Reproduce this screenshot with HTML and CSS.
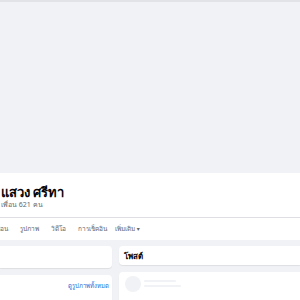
FILE: index.html
```html
<!DOCTYPE html>
<html lang="th">
<head>
  <meta charset="UTF-8">
  <title>แสวง ศรีทา</title>
  <link rel="stylesheet" href="styles.css">
</head>
<body>

<div class="topbar"></div>

<div class="profile-head">
  <div class="cover"></div>
  <div class="identity">
    <h1 class="name">แสวง ศรีทา</h1>
    <div class="friends">เพื่อน 621 คน</div>
  </div>
  <nav class="tabs">
    <span class="tab tab-cut">เพื่อน</span>
    <span class="tab">รูปภาพ</span>
    <span class="tab">วิดีโอ</span>
    <span class="tab">การเช็คอิน</span>
    <span class="tab tab-more">เพิ่มเติม <span class="caret">▾</span></span>
  </nav>
</div>

<div class="content">
  <div class="col col-left">
    <div class="card intro"></div>
    <div class="card photos">
      <a class="see-all" href="#">ดูรูปภาพทั้งหมด</a>
    </div>
  </div>
  <div class="col col-right">
    <div class="card posts-title">โพสต์</div>
    <div class="card post">
      <div class="skeleton-avatar"></div>
      <div class="skeleton-lines">
        <div class="bar short"></div>
        <div class="bar"></div>
      </div>
    </div>
  </div>
</div>

</body>
</html>
```

FILE: styles.css
```css
body {
  margin: 0;
  background: #f0f2f5;
  font-family: 'Noto Sans', 'DejaVu Sans', sans-serif;
  color: #050505;
  overflow: hidden;
  height: 300px;
}
.topbar {
  height: 2px;
  background: #e2e3e6;
}
.profile-head {
  background: #ffffff;
}
.cover {
  height: 171px;
  background: #f0f2f5;
}
.identity {
  padding: 11px 0 7px 1px;
}
.name {
  margin: 0;
  font-size: 13px;
  font-weight: bold;
  line-height: 16px;
}
.friends {
  font-size: 7px;
  color: #65676b;
  line-height: 10px;
}
.tabs {
  border-top: 1px solid #dddfe2;
  height: 22px;
  display: flex;
  align-items: center;
  gap: 12px;
  font-size: 6.5px;
  color: #65676b;
}
.tab-cut {
  margin-left: -6px;
}
.tab-more {
  margin-left: -4px;
}
.caret {
  font-size: 6px;
}
.content {
  display: flex;
  gap: 7px;
  padding-top: 6px;
}
.col {
  display: flex;
  flex-direction: column;
  gap: 7px;
}
.col-left {
  width: 112px;
}
.col-right {
  flex: 1;
}
.card {
  background: #ffffff;
  border-radius: 4px;
  box-shadow: 0 1px 1px rgba(0, 0, 0, 0.08);
}
.col-left .card {
  border-top-left-radius: 0;
  border-bottom-left-radius: 0;
}
.col-right .card {
  border-top-right-radius: 0;
  border-bottom-right-radius: 0;
}
.intro {
  height: 22px;
}
.photos {
  height: 30px;
  display: flex;
  justify-content: flex-end;
  padding: 6px 3px 0 0;
}
.see-all {
  font-size: 6px;
  color: #216fdb;
  text-decoration: none;
}
.posts-title {
  height: 19px;
  padding-left: 5px;
  font-size: 8px;
  font-weight: bold;
  line-height: 19px;
}
.post {
  height: 30px;
  display: flex;
  gap: 3px;
  padding: 4px 6px;
}
.skeleton-avatar {
  width: 16px;
  height: 16px;
  border-radius: 50%;
  background: #f0f2f5;
}
.skeleton-lines {
  display: flex;
  flex-direction: column;
  gap: 3px;
  padding-top: 4px;
}
.bar {
  width: 37px;
  height: 2px;
  border-radius: 1px;
  background: #f0f2f5;
}
.bar.short {
  width: 32px;
}
```
